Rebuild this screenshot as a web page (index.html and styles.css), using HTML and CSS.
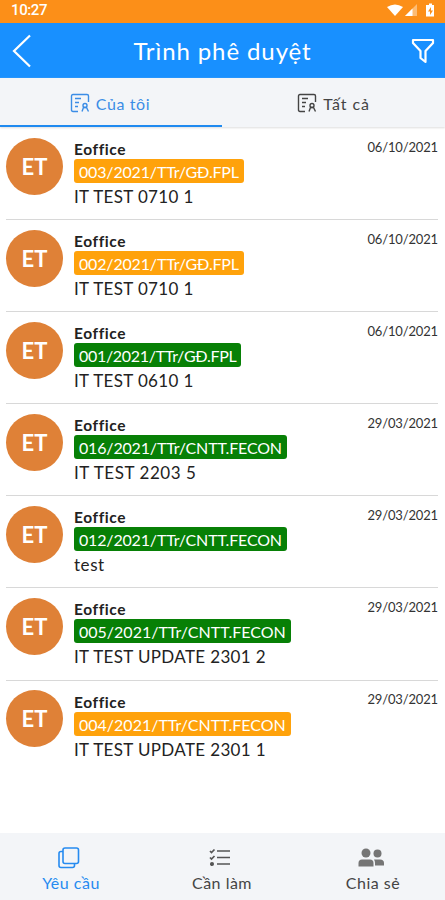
FILE: index.html
```html
<!DOCTYPE html>
<html lang="vi">
<head>
<meta charset="utf-8">
<title>Trình phê duyệt</title>
<link rel="stylesheet" href="styles.css">
</head>
<body>
<div class="app">
  <div class="status">
    <span class="clock">10:27</span>
    <svg class="signals" width="48" height="16" viewBox="0 0 48 16" fill="#fff">
      <path d="M0 4Q8 -1 16 4L8 13Z"/>
      <path d="M30 1V13H18Z" opacity=".4"/><path d="M25.500 5.500V13H18Z"/>
      <path fill-rule="evenodd" d="M40 2h2V.5h3V2h2v11.500h-8V2zM44 4l-3 4.500h2V12l3-4.500h-2z"/>
    </svg>
  </div>
  <header class="header">
    <svg class="back" width="20" height="34" viewBox="0 0 20 34"><path d="M18 1.500L2 17L18 32.500"/></svg>
    <h1>Trình phê duyệt</h1>
    <svg class="filter" width="24" height="26" viewBox="0 0 24 26"><path d="M2 2H22V5L14.500 13V24L9.500 20V13L2 5Z"/></svg>
  </header>
  <nav class="tabs">
    <div class="tab active">
      <svg width="20" height="20" viewBox="0 0 20 20"><path d="M8 18.500H3Q1.500 18.500 1.500 17V3Q1.500 1.500 3 1.500H17Q18.500 1.500 18.500 3V9M5 5.500H11M5 9.500H9M5 13.500H8M12 18.500L13.500 14.500H16.500L18.500 18.500"/><circle cx="15" cy="12.500" r="2"/></svg>
      <span>Của tôi</span>
    </div>
    <div class="tab all">
      <svg width="20" height="20" viewBox="0 0 20 20"><path d="M8 18.500H3Q1.500 18.500 1.500 17V3Q1.500 1.500 3 1.500H17Q18.500 1.500 18.500 3V9M5 5.500H11M5 9.500H9M5 13.500H8M12 18.500L13.500 14.500H16.500L18.500 18.500"/><circle cx="15" cy="12.500" r="2"/></svg>
      <span>Tất cả</span>
    </div>
  </nav>
  <main class="list">
    <article class="row"><div class="avatar">ET</div><div class="info"><b>Eoffice</b><span class="badge">003/2021/TTr/GĐ.FPL</span><p>IT TEST 0710 1</p></div><time>06/10/2021</time></article>
    <article class="row"><div class="avatar">ET</div><div class="info"><b>Eoffice</b><span class="badge">002/2021/TTr/GĐ.FPL</span><p>IT TEST 0710 1</p></div><time>06/10/2021</time></article>
    <article class="row"><div class="avatar">ET</div><div class="info"><b>Eoffice</b><span class="badge done tight">001/2021/TTr/GĐ.FPL</span><p>IT TEST 0610 1</p></div><time>06/10/2021</time></article>
    <article class="row"><div class="avatar">ET</div><div class="info"><b>Eoffice</b><span class="badge done">016/2021/TTr/CNTT.FECON</span><p class="wide">IT TEST 2203 5</p></div><time>29/03/2021</time></article>
    <article class="row"><div class="avatar">ET</div><div class="info"><b>Eoffice</b><span class="badge done">012/2021/TTr/CNTT.FECON</span><p class="wide">test</p></div><time>29/03/2021</time></article>
    <article class="row"><div class="avatar">ET</div><div class="info"><b>Eoffice</b><span class="badge done loose">005/2021/TTr/CNTT.FECON</span><p>IT TEST UPDATE 2301 2</p></div><time>29/03/2021</time></article>
    <article class="row"><div class="avatar">ET</div><div class="info"><b>Eoffice</b><span class="badge loose">004/2021/TTr/CNTT.FECON</span><p>IT TEST UPDATE 2301 1</p></div><time>29/03/2021</time></article>
  </main>
  <footer class="bottom">
    <div class="item active">
      <svg width="24" height="24" viewBox="0 0 24 24" fill="none" stroke="currentColor" stroke-width="1.600"><rect x="6" y="2" width="15.500" height="15.500" rx="2"/><path d="M6 5.500H4Q2 5.500 2 7.500V19.500Q2 21.500 4 21.500H15.500Q17.500 21.500 17.500 19.500V17.500"/></svg>
      <span>Yêu cầu</span>
    </div>
    <div class="item">
      <svg width="24" height="24" viewBox="0 0 24 24" fill="none" stroke="#555" stroke-width="1.700"><path d="M9 5H22M9 11.500H22M9 18H22M2 5L3.500 6.500L6.500 3.500M2 11.500L3.500 13L6.500 10"/><circle cx="4" cy="18" r="1.200" fill="#555"/></svg>
      <span>Cần làm</span>
    </div>
    <div class="item">
      <svg width="26" height="24" viewBox="0 0 26 24" fill="#757575"><circle cx="8" cy="7" r="4.500"/><circle cx="19.500" cy="7.500" r="4"/><path d="M.5 20.500V17Q.5 13.500 4 13.500H12Q15.500 13.500 15.500 17V20.500ZM17 19.500V17Q17 15 16 13.500H22Q26 13.500 26 17V19.500Z"/></svg>
      <span>Chia sẻ</span>
    </div>
  </footer>
</div>
</body>
</html>
```
FILE: styles.css
```css
* { box-sizing: border-box; }
body { margin: 0; font-family: Lato, "Open Sans", sans-serif; color: #222; background: #fff; }
.app { width: 445px; height: 900px; display: flex; flex-direction: column; overflow: hidden; }
.status { height: 23px; background: #fc8f18; display: flex; justify-content: space-between; padding: 1px 10px 0 11px; }
.clock { color: #fff; font: 500 15px/19px Roboto, sans-serif; letter-spacing: -.4px; }
.signals { margin-top: 2px; }
.header { height: 55px; background: #1890ff; display: grid; grid-template-columns: 34px 1fr 34px; align-items: center; color: #fff; }
.header h1 { margin: 0; text-align: center; font-size: 24px; font-weight: 400; line-height: 32px; letter-spacing: .9px; }
.header svg { fill: none; stroke: #fff; stroke-width: 2.2; }
.back { margin-left: 12px; }
.filter { stroke-linejoin: round; }
.tabs { height: 49px; background: #f3f5f8; display: grid; grid-template-columns: 222px 223px; box-shadow: 0 1px 2px #ddd; }
.tab { display: flex; align-items: center; justify-content: center; gap: 6px; padding: 3px 2px 0 0; font-size: 16px; letter-spacing: .6px; color: #444; border-bottom: 2px solid transparent; }
.tab.active { color: #3b8de6; border-color: #1f8af0; }
.tab.all { padding-right: 0; letter-spacing: .9px; }
.tab svg { fill: none; stroke: currentColor; stroke-width: 1.4; }
.list { flex: 1; padding: 0 7px 0 6px; }
.row { height: 92.1px; display: flex; padding-top: 10.5px; box-shadow: 0 1px 0 #d8d8d8; }
.row:last-child { box-shadow: none; }
.avatar { width: 57px; height: 57px; border-radius: 50%; background: #df8137; color: #fff; display: grid; place-items: center; font-size: 22px; font-weight: 700; }
.info { margin-left: 11px; flex: 1; display: flex; flex-direction: column; align-items: flex-start; }
.info b { font-size: 15.5px; line-height: 20px; margin-top: 1.5px; letter-spacing: .6px; }
.badge { height: 24px; border-radius: 3px; background: #ffa20b; color: #fff; padding: 0 5px; font-size: 16px; line-height: 26px; letter-spacing: -.17px; white-space: nowrap; }
.badge.done { background: #078006; }
.badge.tight { letter-spacing: -.3px; }
.badge.loose { letter-spacing: 0; }
.info p { margin: 3px 0 0; font-size: 17px; line-height: 22px; letter-spacing: .35px; white-space: nowrap; }
.info p.wide { letter-spacing: .55px; }
time { font-size: 13px; line-height: 18px; letter-spacing: -.15px; color: #333; }
.bottom { height: 67px; background: #f3f5f8; display: grid; grid-template-columns: repeat(3, 151px); justify-content: center; }
.item { display: flex; flex-direction: column; align-items: center; padding: 13px 1px 0 0; font-size: 16px; line-height: 22px; letter-spacing: .5px; color: #444; }
.item.active { color: #268bf0; }
.item svg { margin: 0 4px 2px 0; }
```
